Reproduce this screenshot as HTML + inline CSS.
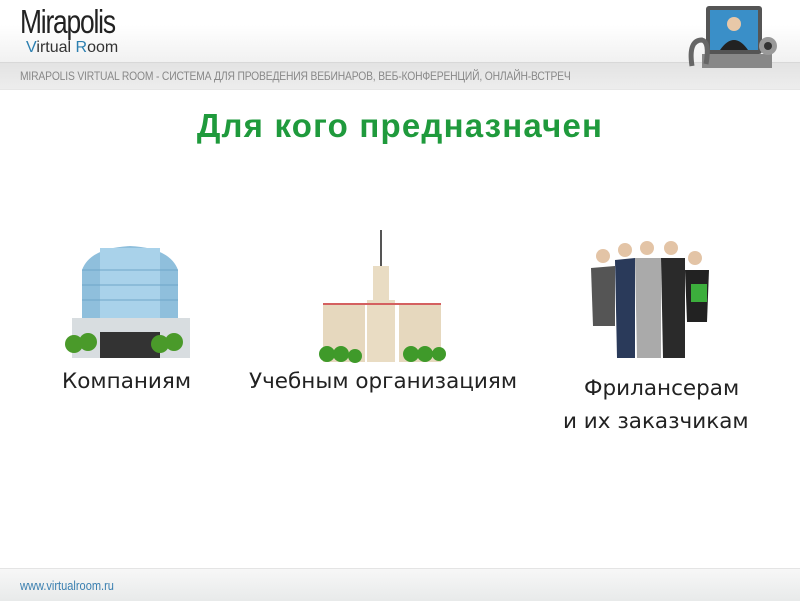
<!DOCTYPE html>
<html><head><meta charset="utf-8"><style>
body{margin:0;width:800px;height:600px;position:relative;background:#fff;font-family:"Liberation Sans","DejaVu Sans",sans-serif;overflow:hidden}
.hdr{position:absolute;left:0;top:0;width:800px;height:62px;background:linear-gradient(#fff 0%,#fff 40%,#f1f1f1 100%)}
.band{position:absolute;left:0;top:62px;width:800px;height:26px;background:linear-gradient(#e3e3e3,#ededed);border-top:1px solid #d8d8d8;border-bottom:1px solid #e6e6e6}
.band span{position:absolute;left:20px;top:6px;font-size:12px;color:#888;letter-spacing:-0.2px;transform:scaleX(.86);transform-origin:left;white-space:nowrap}
.logo1{position:absolute;left:20px;top:3px;font-size:33px;color:#222;letter-spacing:-1.5px;transform:scaleX(.8);transform-origin:left}
.logo2{position:absolute;left:26px;top:39px;font-size:16px;color:#333}
.logo2 b{font-weight:normal;color:#2b7fb0}
h1{position:absolute;left:0;width:800px;top:107px;margin:0;text-align:center;font-size:33px;font-weight:bold;color:#1f9a3c;letter-spacing:1.2px}
.lbl{position:absolute;font-family:"DejaVu Sans",sans-serif;font-size:21.5px;color:#222;white-space:nowrap}
.ftr{position:absolute;left:0;top:568px;width:800px;height:32px;background:linear-gradient(#f7f7f7,#e8eaea);border-top:1px solid #e4e4e4}
.ftr span{position:absolute;left:20px;top:9px;font-size:13px;color:#3a7fb0;transform:scaleX(.85);transform-origin:left}
</style></head><body>
<div class="hdr"></div>
<div class="band"><span>MIRAPOLIS VIRTUAL ROOM - СИСТЕМА ДЛЯ ПРОВЕДЕНИЯ ВЕБИНАРОВ, ВЕБ-КОНФЕРЕНЦИЙ, ОНЛАЙН-ВСТРЕЧ</span></div>
<div class="logo1">Mirapolis</div>
<div class="logo2"><b>V</b>irtual <b>R</b>oom</div>
<svg style="position:absolute;left:684px;top:4px" width="100" height="76">
<rect x="22" y="2" width="56" height="48" rx="3" fill="#555"/>
<rect x="26" y="6" width="48" height="40" fill="#3a8fc8"/>
<circle cx="50" cy="20" r="7" fill="#e8c8a8"/>
<path d="M36 46 Q50 26 64 46Z" fill="#222"/>
<rect x="18" y="50" width="70" height="14" fill="#888"/>
<path d="M8 62 Q4 36 18 36 Q26 38 22 60" fill="none" stroke="#666" stroke-width="5"/>
<circle cx="84" cy="42" r="9" fill="#999"/><circle cx="84" cy="42" r="4" fill="#333"/>
</svg>
<h1>Для кого предназначен</h1>
<svg style="position:absolute;left:60px;top:240px" width="140" height="125">
<path d="M22 80 L22 30 Q30 8 70 6 Q110 8 118 30 L118 80Z" fill="#8fbfdc"/>
<rect x="40" y="8" width="60" height="72" fill="#a9d2ea"/>
<g stroke="#6ea6c8" stroke-width="1"><line x1="22" y1="30" x2="118" y2="30"/><line x1="22" y1="45" x2="118" y2="45"/><line x1="22" y1="60" x2="118" y2="60"/></g>
<rect x="12" y="78" width="118" height="40" fill="#d8dde0"/>
<rect x="40" y="92" width="60" height="26" fill="#333"/>
<g fill="#4a9a2a"><circle cx="14" cy="104" r="9"/><circle cx="28" cy="102" r="9"/><circle cx="100" cy="104" r="9"/><circle cx="114" cy="102" r="9"/></g>
</svg>
<svg style="position:absolute;left:315px;top:228px" width="140" height="140">
<line x1="66" y1="2" x2="66" y2="40" stroke="#555" stroke-width="2"/>
<rect x="58" y="38" width="16" height="40" fill="#e9dcc3"/>
<rect x="52" y="72" width="28" height="62" fill="#e9dcc3"/>
<rect x="8" y="75" width="42" height="59" fill="#e6d8be"/>
<rect x="84" y="75" width="42" height="59" fill="#e6d8be"/>
<rect x="8" y="75" width="118" height="2" fill="#d46060"/>
<g fill="#3f9a2a"><circle cx="12" cy="126" r="8"/><circle cx="26" cy="126" r="8"/><circle cx="40" cy="128" r="7"/><circle cx="96" cy="126" r="8"/><circle cx="110" cy="126" r="8"/><circle cx="124" cy="126" r="7"/></g>
</svg>
<svg style="position:absolute;left:585px;top:238px" width="130" height="130">
<g fill="#e3c4a6"><circle cx="18" cy="18" r="7"/><circle cx="40" cy="12" r="7"/><circle cx="62" cy="10" r="7"/><circle cx="86" cy="10" r="7"/><circle cx="110" cy="20" r="7"/></g>
<path d="M6 30 L30 28 L30 88 L8 88Z" fill="#555"/>
<path d="M30 22 L50 20 L50 120 L32 120Z" fill="#2a3a5a"/>
<path d="M50 20 L76 20 L76 120 L52 120Z" fill="#aaa"/>
<path d="M76 20 L100 20 L100 120 L78 120Z" fill="#2a2a2a"/>
<path d="M100 32 L124 32 L122 84 L102 84Z" fill="#222"/>
<rect x="106" y="46" width="16" height="18" fill="#3cae3c"/>
</svg>
<div class="lbl" style="left:62px;top:369px">Компаниям</div>
<div class="lbl" style="left:249px;top:369px">Учебным организациям</div>
<div class="lbl" style="left:584px;top:376px">Фрилансерам</div>
<div class="lbl" style="left:563px;top:409px">и их заказчикам</div>
<div class="ftr"><span>www.virtualroom.ru</span></div>
</body></html>
